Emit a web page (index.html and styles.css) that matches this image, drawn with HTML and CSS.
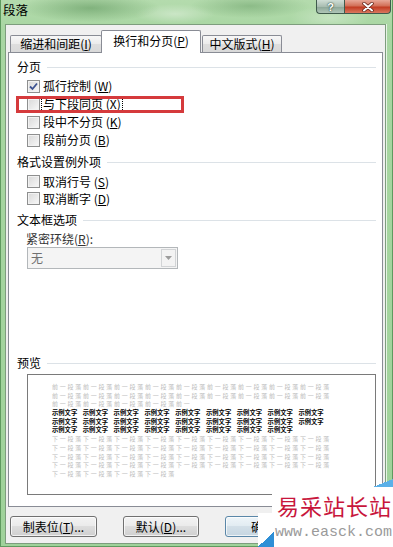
FILE: index.html
```html
<!DOCTYPE html>
<html lang="zh">
<head>
<meta charset="utf-8">
<title>段落</title>
<link rel="stylesheet" href="styles.css">
</head>
<body>
<div class="window">
  <div class="titlebar">
    <span class="title">段落</span>
    <div class="caps">
      <div class="cap help">?</div>
      <div class="cap close">
        <svg width="14" height="10" viewBox="0 0 14 10"><path d="M3 1.5 L11 8.5 M11 1.5 L3 8.5" stroke="#5a1a10" stroke-width="3.4" stroke-linecap="round"/><path d="M3 1.5 L11 8.5 M11 1.5 L3 8.5" stroke="#fff" stroke-width="2" stroke-linecap="round"/></svg>
      </div>
    </div>
  </div>
  <div class="client">
    <div class="tabs">
      <div class="tab t1">缩进和间距(<u>I</u>)</div>
      <div class="tab t2">换行和分页(<u>P</u>)</div>
      <div class="tab t3">中文版式(<u>H</u>)</div>
    </div>
    <div class="panel">
      <div class="grp"><span>分页</span><i></i></div>
      <div class="cblist">
        <div class="cb"><span class="box"><svg width="11" height="11" viewBox="0 0 11 11"><path d="M2 5.5 L4.5 8 L9 2.5" fill="none" stroke="#3d5391" stroke-width="1.8"/></svg></span><span class="lbl">孤行控制 (<u>W</u>)</span></div>
        <div class="cb"><span class="box"></span><span class="lbl focus">与下段同页 (<u>X</u>)</span><div class="redbox"></div></div>
        <div class="cb"><span class="box"></span><span class="lbl">段中不分页 (<u>K</u>)</span></div>
        <div class="cb"><span class="box"></span><span class="lbl">段前分页 (<u>B</u>)</span></div>
      </div>
      <div class="grp g2"><span>格式设置例外项</span><i></i></div>
      <div class="cblist two">
        <div class="cb"><span class="box"></span><span class="lbl">取消行号 (<u>S</u>)</span></div>
        <div class="cb"><span class="box"></span><span class="lbl">取消断字 (<u>D</u>)</span></div>
      </div>
      <div class="grp g3"><span>文本框选项</span><i></i></div>
      <div class="ddlabel">紧密环绕(<u>R</u>):</div>
      <div class="dd">
        <span class="val">无</span>
        <span class="arr"><svg width="7" height="4" viewBox="0 0 7 4"><path d="M0 0 H7 L3.5 4 Z" fill="#9c9c9c"/></svg></span>
      </div>
      <div class="grp g4"><span>预览</span><i></i></div>
      <div class="preview">
        <div class="pl grey">前一段落前一段落前一段落前一段落前一段落前一段落前一段落前一段落前一段落</div>
        <div class="pl grey">前一段落前一段落前一段落前一段落前一段落前一段落前一段落前一段落前一段落</div>
        <div class="pl grey">前一段落前一段落前一段落前一段落前一</div>
        <div class="pl blk"><span>示例文字</span><span>示例文字</span><span>示例文字</span><span>示例文字</span><span>示例文字</span><span>示例文字</span><span>示例文字</span><span>示例文字</span><span>示例文字</span></div>
        <div class="pl blk"><span>示例文字</span><span>示例文字</span><span>示例文字</span><span>示例文字</span><span>示例文字</span><span>示例文字</span><span>示例文字</span><span>示例文字</span><span>示例文字</span></div>
        <div class="pl blk"><span>示例文字</span><span>示例文字</span><span>示例文字</span><span>示例文字</span><span>示例文字</span><span>示例文字</span><span>示例文字</span><span>示例文字</span></div>
        <div class="pl grey">下一段落下一段落下一段落下一段落下一段落下一段落下一段落下一段落下一段落</div>
        <div class="pl grey">下一段落下一段落下一段落下一段落下一段落下一段落下一段落下一段落下一段落</div>
        <div class="pl grey">下一段落下一段落下一段落下一段落下一段落下一段落下一段落下一段落下一段落</div>
        <div class="pl grey">下一段落下一段落下一段落下一段落下一段落下一段落下一段落下一段落下一段落</div>
        <div class="pl grey">下一段落下一段落下一段落下一段落</div>
      </div>
    </div>
    <div class="btns">
      <div class="btn b1">制表位(<u>T</u>)...</div>
      <div class="btn b2">默认(<u>D</u>)...</div>
      <div class="btn b3">确定</div>
    </div>
  </div>
  <div class="wm">
    <div class="tri1"></div>
    <div class="tri2"></div>
    <div class="cn">易采站长站</div>
    <div class="url">www.easck.com</div>
  </div>
</div>
</body>
</html>
```
FILE: styles.css
```css
* { box-sizing: border-box; margin: 0; padding: 0; }
html, body { width: 393px; height: 547px; overflow: hidden; }
body {
  font-family: "Noto Sans CJK SC", "Noto Sans", sans-serif;
  font-size: 12px;
  color: #000;
  background: #a6d4a0;
}
u { text-decoration: underline; text-underline-offset: 1px; }

.window {
  position: relative;
  width: 393px;
  height: 547px;
  display: flex;
  flex-direction: column;
  background:
    radial-gradient(ellipse 70px 14px at 90px 8px, rgba(70,130,70,.45), transparent),
    radial-gradient(ellipse 60px 12px at 250px 6px, rgba(70,130,70,.35), transparent),
    radial-gradient(ellipse 40px 10px at 175px 14px, rgba(255,255,255,.35), transparent),
    radial-gradient(ellipse 40px 12px at 330px 18px, rgba(255,255,255,.3), transparent),
    linear-gradient(#b4dbad, #a8d6a2 30px, #9fd29a);
  box-shadow: inset 1px 0 0 #5f9a5f, inset -1px 0 0 #5f9a5f, inset 0 -1px 0 #5f9a5f;
}

.titlebar {
  height: 24px;
  display: flex;
  align-items: flex-start;
  padding: 0 2px 0 3px;
}
.title { margin-top: 3px; line-height: 14px; font-size: 12.5px; }
.caps { margin-left: auto; display: flex; }
.cap {
  height: 14px;
  border: 1px solid #3f5a4c;
  border-top: none;
  display: flex;
  align-items: center;
  justify-content: center;
}
.help {
  width: 28px;
  border-right: none;
  border-radius: 0 0 0 4px;
  background: linear-gradient(#d0ded6, #a9bdb1 50%, #8ba596 51%, #b0c6b8);
  color: #fff;
  font-family: "Liberation Sans", sans-serif;
  font-weight: bold;
  font-size: 11px;
  line-height: 12px;
  text-shadow: 0 0 2px #2c4a3a, 0 0 1px #2c4a3a;
}
.close {
  width: 47px;
  border-radius: 0 0 4px 0;
  background: linear-gradient(#e8a898, #d27058 45%, #c23c22 55%, #da7860);
}

.client {
  flex: 1;
  margin: 0 7px 3px 5px;
  background: #f0f0f0;
  border: 1px solid #7d9d7d;
  padding: 5px 2px 0 2px;
  display: flex;
  flex-direction: column;
  box-shadow: 1px 0 0 #e6f3e4;
}

.tabs {
  display: flex;
  align-items: flex-end;
  height: 22px;
  padding-left: 2px;
}
.tab {
  height: 17px;
  border: 1px solid #898c95;
  border-bottom: none;
  border-radius: 2px 2px 0 0;
  background: linear-gradient(#f7f7f7, #ebebeb 50%, #dedede 51%, #d9d9d9);
  display: flex;
  align-items: center;
  justify-content: center;
  line-height: 14px;
  white-space: nowrap;
}
.t1 { width: 92px; }
.t2 {
  width: 100px;
  height: 23px;
  margin-left: -1px;
  margin-bottom: -1px;
  background: #fff;
  position: relative;
  z-index: 2;
  padding-bottom: 2px;
}
.t3 { width: 80px; margin-left: 1px; }

.panel {
  width: 375px;
  background: #fff;
  border: 1px solid #898c95;
  padding: 6px 6px 11px 8px;
}
.grp {
  display: flex;
  align-items: center;
  height: 16px;
  line-height: 16px;
}
.grp i { flex: 1; height: 1px; background: #dce2e7; margin-left: 6px; }
.g2 { margin-top: 5px; }
.g3 { margin-top: 5px; }
.g4 { margin-top: 86px; }

.cblist { margin: 2px 0 0 10px; }
.cblist.two { margin-top: 3px; }
.cb {
  display: flex;
  align-items: center;
  height: 18px;
  position: relative;
}
.two .cb { height: 17px; }
.box {
  width: 13px;
  height: 13px;
  border: 1px solid #8e8f8f;
  background: linear-gradient(135deg, #d8d8d8, #f8f8f8);
  box-shadow: inset 0 0 0 1px #f2f2f2;
  margin-right: 2px;
  display: flex;
  align-items: center;
  justify-content: center;
}
.lbl { line-height: 14px; padding: 0 1px; white-space: nowrap; }
.focus { outline: 1px dotted #000; outline-offset: 0; }
.redbox {
  position: absolute;
  left: -11px;
  top: 1px;
  width: 168px;
  height: 17px;
  border: 3px solid #d53a3c;
}

.ddlabel { margin: 3px 0 0 9px; height: 16px; line-height: 16px; color: #333; }
.dd {
  display: flex;
  width: 151px;
  height: 22px;
  margin-left: 10px;
  border: 1px solid #b3b7ba;
  background: #f4f4f4;
}
.dd .val { flex: 1; padding-left: 3px; line-height: 20px; color: #707070; }
.dd .arr {
  width: 15px;
  margin: 1px;
  border: 1px solid #d2d4d6;
  background: #f3f3f3;
  display: flex;
  align-items: center;
  justify-content: center;
}

.preview {
  margin: 3px 0 0 10px;
  height: 121px;
  border: 1px solid #7a7a7a;
  background: #fff;
  padding: 8px 0 0 24px;
  overflow: hidden;
}
.pl {
  height: 8.7px;
  line-height: 8.7px;
  font-size: 6px;
  white-space: nowrap;
}
.grey { color: #bcbcbc; letter-spacing: 1.75px; }
.blk { color: #000; font-weight: 700; font-size: 6.3px; }
.blk span { display: inline-block; width: 24px; margin-right: 6.8px; letter-spacing: 0; }

.btns {
  display: flex;
  margin: 9px 0 0 2px;
}
.btn {
  height: 21px;
  border: 1px solid #707070;
  border-radius: 3px;
  background: linear-gradient(#f3f3f3, #ebebeb 45%, #dddddd 50%, #cfcfcf);
  box-shadow: inset 0 0 0 1px rgba(255,255,255,.7);
  display: flex;
  align-items: center;
  justify-content: center;
  line-height: 14px;
  white-space: nowrap;
}
.b1 { width: 87px; }
.b2 { width: 76px; margin-left: 26px; }
.b3 {
  width: 76px;
  margin-left: 26px;
  border-color: #5a87a8;
  background: linear-gradient(#eef5f9, #e2ecf2 45%, #d2dfe8 50%, #c6d6e1);
}

.wm {
  position: absolute;
  left: 258px;
  top: 487px;
  right: 0;
  bottom: 0;
  z-index: 5;
}
.wm::before {
  content: "";
  position: absolute;
  inset: 0;
  background: #fff;
  clip-path: polygon(14px 0, 100% 0, 100% 100%, 0 100%, 0 26px, 14px 26px);
}
.wm .tri1 {
  position: absolute;
  left: 0;
  bottom: 0;
  width: 16px;
  height: 16px;
  background: linear-gradient(to bottom right, transparent 50%, #2e8fd6 50%);
}
.wm .tri2 {
  position: absolute;
  right: 0;
  top: -8px;
  width: 20px;
  height: 8px;
  background: linear-gradient(to bottom right, transparent 50%, #5ab0e8 50%);
}
.wm .cn {
  position: absolute;
  left: 19px;
  top: 6px;
  font-size: 22px;
  line-height: 24px;
  letter-spacing: 1px;
  color: #c8163c;
  white-space: nowrap;
}
.wm .url {
  position: absolute;
  left: 17px;
  top: 40px;
  font-family: "Liberation Mono", monospace;
  font-size: 15px;
  line-height: 12px;
  color: #9a9a9a;
  white-space: nowrap;
}
```
